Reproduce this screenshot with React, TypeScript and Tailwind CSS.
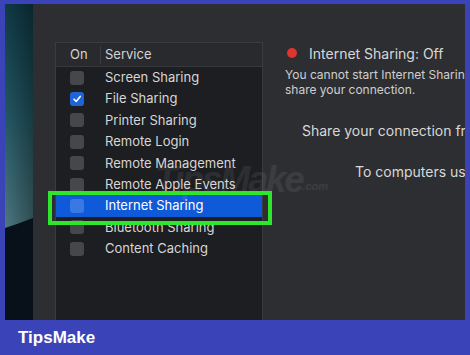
const services = [
  { name: "Screen Sharing", on: false },
  { name: "File Sharing", on: true },
  { name: "Printer Sharing", on: false },
  { name: "Remote Login", on: false },
  { name: "Remote Management", on: false },
  { name: "Remote Apple Events", on: false },
  { name: "Internet Sharing", on: false, selected: true },
  { name: "Bluetooth Sharing", on: false },
  { name: "Content Caching", on: false },
];

const Wallpaper = () => (
  <svg width="28" height="316" viewBox="0 0 28 316" className="block shrink-0">
    <defs>
      <linearGradient id="wp" x1="0" y1="0" x2="0" y2="1">
        <stop offset="0" stopColor="#0f3a45" />
        <stop offset="0.35" stopColor="#235763" />
        <stop offset="0.7" stopColor="#4b7780" />
        <stop offset="1" stopColor="#5c8188" />
      </linearGradient>
      <linearGradient id="wpx" x1="0" y1="0" x2="1" y2="0">
        <stop offset="0" stopColor="#000" stopOpacity="0" />
        <stop offset="1" stopColor="#000" stopOpacity="0.35" />
      </linearGradient>
    </defs>
    <rect width="28" height="316" fill="url(#wp)" />
    <rect width="28" height="316" fill="url(#wpx)" />
    <polygon points="0,224 12,220 28,214 28,316 0,316" fill="#08111a" />
  </svg>
);

const Checkbox = ({ on, selected }: { on: boolean; selected?: boolean }) => {
  if (on) {
    return (
      <div className="w-[14px] h-[14px] rounded-[3px] bg-[#1f63d8] flex items-center justify-center">
        <svg width="10" height="10" viewBox="0 0 10 10">
          <path d="M2 5.2 L4.2 7.4 L8.2 2.4" stroke="white" strokeWidth="1.6" fill="none" strokeLinecap="round" strokeLinejoin="round" />
        </svg>
      </div>
    );
  }
  return (
    <div
      className={
        selected
          ? "w-[14px] h-[14px] rounded-[3px] bg-[#3a78e2]"
          : "w-[14px] h-[14px] rounded-[3px] bg-[#46474b]"
      }
    />
  );
};

export default function App() {
  return (
    <div className="w-[470px] h-[355px] bg-[#3b43b9] flex flex-col pt-[4px] px-[5px] overflow-hidden font-['Inter',sans-serif]">
      <div className="flex h-[316px] shrink-0">
        <Wallpaper />
        <div className="relative flex-1 flex bg-[#2d2e32] overflow-hidden">
          {/* table side */}
          <div className="pl-[22px] pt-[38px] shrink-0">
            <div className="w-[208px] h-[280px] bg-[#1d1e21] border border-[#3a3b3f] border-b-0">
              <div className="flex items-center h-[24px] bg-[#292a2e] border-b border-[#38393d] text-[13px] text-[#d4d4d4]">
                <div className="w-[44px] pl-[14px]">On</div>
                <div className="w-px h-[18px] bg-[#3c3d41]" />
                <div className="pl-[4px]">Service</div>
              </div>
              {services.map((s) => (
                <div
                  key={s.name}
                  className={
                    s.selected
                      ? "flex items-center h-[21.4px] bg-[#0e5ad8] text-white text-[13px]"
                      : "flex items-center h-[21.4px] text-[#d6d6d6] text-[13px]"
                  }
                >
                  <div className="w-[49px] pl-[14px]">
                    <Checkbox on={s.on} selected={s.selected} />
                  </div>
                  <span className="whitespace-nowrap">{s.name}</span>
                </div>
              ))}
            </div>
          </div>

          {/* detail side */}
          <div className="flex-1 min-w-0 overflow-hidden pt-[37px] pl-[22px] text-[#d8d8d8] whitespace-nowrap">
            <div className="flex items-center h-[24px]">
              <div className="w-[10px] h-[10px] rounded-full bg-[#e0342e] ml-[2px]" />
              <span className="ml-[12px] text-[14px]">Internet Sharing: Off</span>
            </div>
            <div className="mt-[2px] text-[12px] leading-[15px] text-[#cfcfcf]">
              <div>You cannot start Internet Sharing because you have not selected a port to</div>
              <div>share your connection.</div>
            </div>
            <div className="mt-[23px] pl-[17px] text-[14px] leading-[22px]">
              Share your connection from:
            </div>
            <div className="mt-[19px] pl-[70px] text-[14px] leading-[22px]">
              To computers using:
            </div>
          </div>

          {/* watermark */}
          <div className="absolute left-[122px] top-[156px] flex items-end text-white/[0.07] italic font-bold pointer-events-none">
            <span className="text-[36px] leading-[40px] tracking-[-2px] font-['Liberation_Sans',sans-serif]">TipsMake</span>
            <span className="text-[11px] mb-[6px] font-['Liberation_Sans',sans-serif]">.com</span>
          </div>

          {/* highlight annotation */}
          <div className="absolute left-[15px] top-[187px] w-[224px] h-[34px] border-4 border-[#2ee62b]" />
        </div>
      </div>
      <div className="flex-1 flex items-center pl-[13px]">
        <span className="text-white font-bold text-[17px] font-['Liberation_Sans',sans-serif]">TipsMake</span>
      </div>
    </div>
  );
}
